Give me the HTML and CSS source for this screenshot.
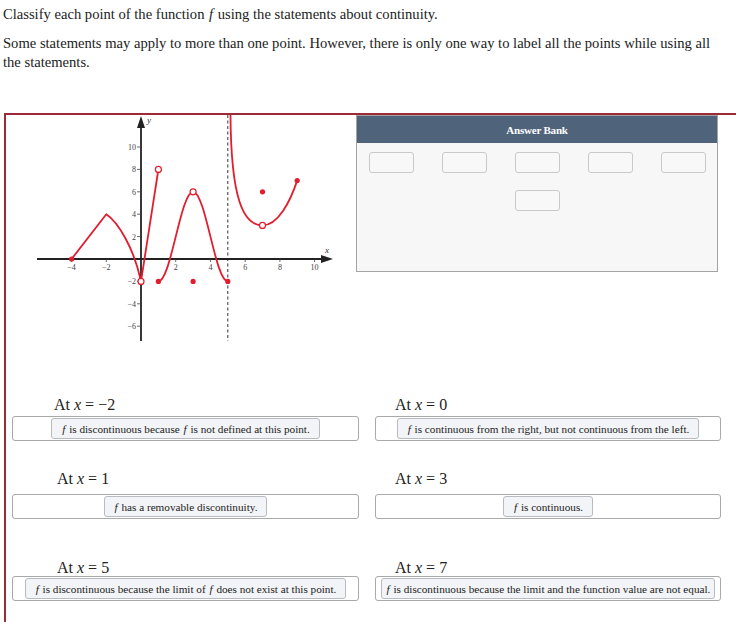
FILE: index.html
```html
<!DOCTYPE html>
<html lang="en">
<head>
<meta charset="utf-8">
<title>Continuity</title>
<link rel="stylesheet" href="styles.css">
</head>
<body>
<div class="intro">
  <p class="lead">Classify each point of the function <i class="fn">f</i> using the statements about continuity.</p>
  <p class="note">Some statements may apply to more than one point. However, there is only one way to label all the points while using all the statements.</p>
</div>

<div class="frame">
  <div class="top">
    <svg class="graph" width="350" height="232" viewBox="6 115 350 232" xmlns="http://www.w3.org/2000/svg">
      <line x1="227.8" y1="115" x2="227.8" y2="341" stroke="#333" stroke-width="1" stroke-dasharray="3 2.5"/>
      <line x1="37" y1="259" x2="324" y2="259" stroke="#222" stroke-width="1.8"/>
      <polygon points="333,259 321,255 321,263" fill="#222"/>
      <line x1="141" y1="341" x2="141" y2="126" stroke="#222" stroke-width="1.8"/>
      <polygon points="141,116 137,128 145,128" fill="#222"/>
      <g stroke="#444" stroke-width="0.8">
        <line x1="137" y1="147" x2="141" y2="147"/>
        <line x1="137" y1="169.4" x2="141" y2="169.4"/>
        <line x1="137" y1="191.8" x2="141" y2="191.8"/>
        <line x1="137" y1="214.2" x2="141" y2="214.2"/>
        <line x1="137" y1="236.6" x2="141" y2="236.6"/>
        <line x1="137" y1="281.4" x2="141" y2="281.4"/>
        <line x1="137" y1="303.8" x2="141" y2="303.8"/>
        <line x1="137" y1="326.2" x2="141" y2="326.2"/>
        <line x1="71.6" y1="259" x2="71.6" y2="262"/>
        <line x1="106.3" y1="259" x2="106.3" y2="262"/>
        <line x1="175.7" y1="259" x2="175.7" y2="262"/>
        <line x1="210.4" y1="259" x2="210.4" y2="262"/>
        <line x1="245.2" y1="259" x2="245.2" y2="262"/>
        <line x1="279.9" y1="259" x2="279.9" y2="262"/>
        <line x1="314.6" y1="259" x2="314.6" y2="262"/>
      </g>
      <g class="ticklbl" text-anchor="end">
        <text x="136" y="150">10</text>
        <text x="136" y="172.4">8</text>
        <text x="136" y="194.8">6</text>
        <text x="136" y="217.2">4</text>
        <text x="136" y="239.6">2</text>
        <text x="136" y="284.4">−2</text>
        <text x="136" y="306.8">−4</text>
        <text x="136" y="329.2">−6</text>
      </g>
      <g class="ticklbl" text-anchor="middle">
        <text x="71.6" y="270">−4</text>
        <text x="106.3" y="270">−2</text>
        <text x="175.7" y="270">2</text>
        <text x="210.4" y="270">4</text>
        <text x="245.2" y="270">6</text>
        <text x="279.9" y="270">8</text>
        <text x="314.6" y="270">10</text>
      </g>
      <text class="axlbl" x="147" y="123">y</text>
      <text class="axlbl" x="325" y="253">x</text>
      <g fill="none" stroke="#e11d2e" stroke-width="1.8" stroke-linejoin="round">
        <path d="M71.6,259 L106.3,214.2 C118,222 134,248 141,281.4"/>
        <path d="M141,281.4 L158.4,169.4"/>
        <path d="M158.4,281.4 C170.9,281.4 180.6,191.8 193.1,191.8 C205.6,191.8 215.3,281.4 227.8,281.4"/>
        <path d="M230.5,115 C231,198 243,225.4 262.5,225.4 C278,225.4 290,202 297.2,180.6"/>
      </g>
      <g fill="#e11d2e">
        <circle cx="71.6" cy="259" r="2.6"/>
        <circle cx="158.4" cy="281.4" r="2.6"/>
        <circle cx="193.1" cy="281.4" r="2.6"/>
        <circle cx="227.8" cy="281.4" r="2.6"/>
        <circle cx="262.5" cy="191.8" r="2.6"/>
        <circle cx="297.2" cy="180.6" r="2.6"/>
      </g>
      <g fill="#fff" stroke="#e11d2e" stroke-width="1.2">
        <circle cx="141" cy="281.4" r="3"/>
        <circle cx="158.4" cy="169.4" r="3"/>
        <circle cx="193.1" cy="191.8" r="3"/>
        <circle cx="262.5" cy="225.4" r="3"/>
      </g>
    </svg>

    <div class="bank">
      <div class="bank-head">Answer Bank</div>
      <div class="bank-body">
        <div class="bank-slot"></div>
        <div class="bank-slot"></div>
        <div class="bank-slot"></div>
        <div class="bank-slot"></div>
        <div class="bank-slot"></div>
        <div class="bank-slot"></div>
      </div>
    </div>
  </div>

  <div class="answers">
    <div class="slot left r1">
      <div class="slot-label">At <i>x</i> = −2</div>
      <div class="slot-box"><span class="chip"><i class="fn">f</i> is discontinuous because <i class="fn">f</i> is not defined at this point.</span></div>
    </div>
    <div class="slot right r1">
      <div class="slot-label">At <i>x</i> = 0</div>
      <div class="slot-box"><span class="chip"><i class="fn">f</i> is continuous from the right, but not continuous from the left.</span></div>
    </div>
    <div class="slot left r2">
      <div class="slot-label">At <i>x</i> = 1</div>
      <div class="slot-box"><span class="chip"><i class="fn">f</i> has a removable discontinuity.</span></div>
    </div>
    <div class="slot right r2">
      <div class="slot-label">At <i>x</i> = 3</div>
      <div class="slot-box"><span class="chip"><i class="fn">f</i> is continuous.</span></div>
    </div>
    <div class="slot left r3">
      <div class="slot-label">At <i>x</i> = 5</div>
      <div class="slot-box"><span class="chip"><i class="fn">f</i> is discontinuous because the limit of <i class="fn">f</i> does not exist at this point.</span></div>
    </div>
    <div class="slot right r3">
      <div class="slot-label">At <i>x</i> = 7</div>
      <div class="slot-box"><span class="chip"><i class="fn">f</i> is discontinuous because the limit and the function value are not equal.</span></div>
    </div>
  </div>
</div>
</body>
</html>
```

FILE: styles.css
```css
html, body {
  margin: 0;
  padding: 0;
  background: #fff;
}
body {
  font-family: "Liberation Serif", "Times New Roman", serif;
  color: #222;
  width: 736px;
  height: 622px;
  overflow: hidden;
}
.intro {
  padding: 0 3px;
  width: 708px;
}
.intro p {
  margin: 0;
  font-size: 14.6px;
  line-height: 19px;
}
.intro .lead {
  padding-top: 5px;
}
.intro .note {
  margin-top: 10px;
}
.fn {
  padding: 0 1px;
}
.frame {
  margin-top: 41px;
  margin-left: 4px;
  border-top: 2px solid #9c2b37;
  border-left: 2px solid #9c2b37;
  min-height: 520px;
}
.top {
  display: flex;
  align-items: flex-start;
}
.graph {
  display: block;
  flex: none;
}
.ticklbl {
  font-family: "Liberation Serif", "Times New Roman", serif;
  font-size: 8px;
  fill: #444;
}
.axlbl {
  font-family: "Liberation Serif", "Times New Roman", serif;
  font-style: italic;
  font-size: 9px;
  fill: #333;
}
.bank {
  width: 362px;
  height: 157px;
  box-sizing: border-box;
  border: 1px solid #a3a3a3;
  background: #f7f7f7;
  display: flex;
  flex-direction: column;
}
.bank-head {
  height: 27px;
  background: #4f637b;
  color: #fff;
  font-weight: bold;
  font-size: 11px;
  display: flex;
  align-items: center;
  justify-content: center;
  letter-spacing: -0.2px;
}
.bank-body {
  display: flex;
  flex-wrap: wrap;
  justify-content: center;
  gap: 17px 28px;
  padding: 9px 11px 0;
}
.bank-slot {
  width: 45px;
  height: 21px;
  box-sizing: border-box;
  border: 1px solid #c9c9c9;
  border-radius: 3px;
  background: #f8f8f8;
}
.answers {
  display: grid;
  grid-template-columns: 347px 346px;
  column-gap: 16px;
  margin-left: 6px;
  margin-top: 50px;
}
.slot-label {
  font-size: 16px;
  line-height: 16px;
  color: #222;
  white-space: nowrap;
}
.slot.left .slot-label { padding-left: 45px; }
.slot.right .slot-label { padding-left: 20px; }
.slot.r1 .slot-label { margin-bottom: 3px; }
.slot.r1.left .slot-label { padding-left: 42px; }
.slot.r2 { margin-top: 30px; }
.slot.r2 .slot-label { margin-bottom: 7px; }
.slot.r3 { margin-top: 41px; }
.slot.r3 .slot-label { margin-bottom: 0; }
.slot-box {
  height: 25px;
  box-sizing: border-box;
  border: 1px solid #a9a9a9;
  border-radius: 3px;
  background: #fff;
  display: flex;
  align-items: center;
  justify-content: center;
}
.chip {
  height: 21px;
  box-sizing: border-box;
  border: 1px solid #b8bbc2;
  border-radius: 3px;
  background: #f3f4f7;
  padding: 0 9px;
  font-size: 11.2px;
  color: #222;
  display: inline-flex;
  align-items: center;
  white-space: pre;
}
.right.r3 .chip {
  padding: 0 4px;
}
```
